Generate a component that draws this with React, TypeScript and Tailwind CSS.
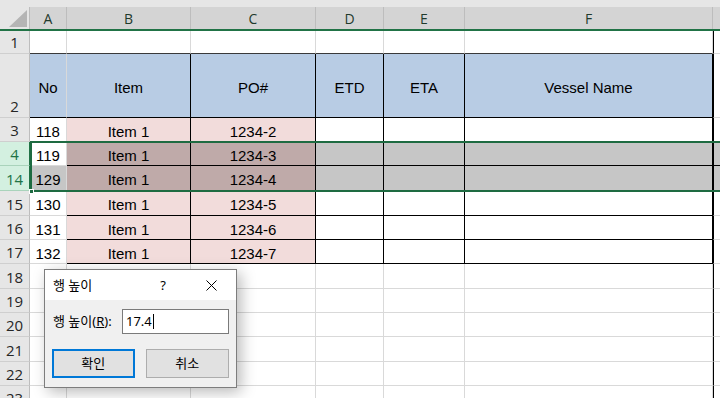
import React from 'react'

type Row = {
  n: string
  h: 'h-[23px]' | 'h-[24px]' | 'h-[25px]' | 'h-[64px]'
  kind: 'blank' | 'head' | 'data'
  sel?: boolean
  active?: boolean
  v?: [string, string, string]
}

const rows: Row[] = [
  { n: '1', h: 'h-[23px]', kind: 'blank' },
  { n: '2', h: 'h-[64px]', kind: 'head' },
  { n: '3', h: 'h-[24px]', kind: 'data', v: ['118', 'Item 1', '1234-2'] },
  { n: '4', h: 'h-[24px]', kind: 'data', sel: true, active: true, v: ['119', 'Item 1', '1234-3'] },
  { n: '14', h: 'h-[25px]', kind: 'data', sel: true, v: ['129', 'Item 1', '1234-4'] },
  { n: '15', h: 'h-[25px]', kind: 'data', v: ['130', 'Item 1', '1234-5'] },
  { n: '16', h: 'h-[24px]', kind: 'data', v: ['131', 'Item 1', '1234-6'] },
  { n: '17', h: 'h-[24px]', kind: 'data', v: ['132', 'Item 1', '1234-7'] },
  { n: '18', h: 'h-[25px]', kind: 'blank' },
  { n: '19', h: 'h-[24px]', kind: 'blank' },
  { n: '20', h: 'h-[24px]', kind: 'blank' },
  { n: '21', h: 'h-[25px]', kind: 'blank' },
  { n: '22', h: 'h-[24px]', kind: 'blank' },
  { n: '23', h: 'h-[24px]', kind: 'blank' },
]

const widths = ['w-[37px]', 'w-[124px]', 'w-[125px]', 'w-[68px]', 'w-[81px]', 'w-[248px]']
const letters = ['A', 'B', 'C', 'D', 'E', 'F']
const headers = ['No', 'Item', 'PO#', 'ETD', 'ETA', 'Vessel Name']

function Cell({ row, col }: { row: Row; col: number }) {
  const inTable = col > 0 && (row.kind === 'head' || row.kind === 'data')
  let bg = 'bg-white'
  let text = ''
  if (row.kind === 'head') {
    bg = 'bg-[#b8cce4]'
    text = headers[col]
  } else if (row.kind === 'data') {
    if (col === 1 || col === 2) bg = row.sel ? 'bg-[#bfaaa9]' : 'bg-[#f2dcdb]'
    else if (row.sel && !(col === 0 && row.active)) bg = 'bg-[#c6c6c6]'
    if (col < 3) text = row.v![col]
  }
  const right = inTable ? 'border-r border-r-black' : 'border-r border-r-[#d9d9d9]'
  let bottom = 'border-b border-b-[#d9d9d9]'
  if (inTable || (row.kind === 'head' && col === 0)) bottom = 'border-b border-b-black'
  if (row.n === '1') bottom = 'border-b border-b-[#3a3a3a]'
  return (
    <div
      className={`${widths[col]} ${bg} ${right} ${bottom} flex shrink-0 items-center justify-center pt-[4px] text-[15px] leading-[18px] text-black`}
    >
      {text}
    </div>
  )
}

function Dialog() {
  return (
    <div className="absolute left-[44px] top-[269px] w-[193px] h-[119px] border border-[#7d7d7d] bg-[#f0f0f0] shadow-[4px_4px_14px_rgba(0,0,0,0.28)] font-['Noto_Sans','Noto_Sans_CJK_KR',sans-serif] text-[13px] text-black">
      <div className="flex h-[30px] items-center bg-white pl-[8px]">
        <span className="leading-none">행 높이</span>
        <span className="ml-[68px] leading-none">?</span>
        <svg className="ml-[40px]" width="11" height="11" viewBox="0 0 11 11">
          <path d="M0.5 0.5 L10.5 10.5 M10.5 0.5 L0.5 10.5" stroke="#000" strokeWidth="1" />
        </svg>
      </div>
      <div className="px-[7px] pt-[9px]">
        <div className="flex h-[25px] items-center">
          <span className="w-[70px] pl-[1px] leading-none">
            행 높이(<span className="underline">R</span>):
          </span>
          <div className="flex h-[25px] w-[107px] items-center border border-[#7a7a7a] bg-white pl-[3px]">
            <span className="leading-none">17.4</span>
            <span className="ml-[1px] h-[15px] w-px bg-black" />
          </div>
        </div>
        <div className="mt-[15px] flex gap-[11px]">
          <button className="h-[29px] w-[83px] border-2 border-[#0078d7] bg-[#e1e1e1]">확인</button>
          <button className="h-[29px] w-[84px] border border-[#adadad] bg-[#e1e1e1]">취소</button>
        </div>
      </div>
    </div>
  )
}

export default function App() {
  return (
    <div className="relative h-[398px] w-[720px] overflow-hidden bg-white font-['Liberation_Sans',Arial,sans-serif]">
      <div className="h-[7px] bg-[#e6e6e6]" />
      <div className="flex h-[24px] border-b-2 border-[#217346] bg-[#d4d4d4] font-['Open_Sans',sans-serif] text-[14px] text-[#1f3a2c]">
        <div className="relative w-[30px] shrink-0 border-r border-[#bdbdbd] bg-[#e6e6e6]">
          <svg className="absolute left-0 top-0" width="30" height="22" viewBox="0 0 30 22">
            <path d="M9 20 L27 20 L27 3 Z" fill="#b5b5b5" />
          </svg>
        </div>
        {letters.map((l, i) => (
          <div key={l} className={`${widths[i]} flex shrink-0 items-center justify-center border-r border-[#bdbdbd]`}>
            {l}
          </div>
        ))}
        <div className="flex-1" />
      </div>
      {rows.map((row) => (
        <div key={row.n} className={`flex ${row.h}`}>
          <div
            className={`flex w-[30px] shrink-0 items-end justify-center border-b border-r pb-[1px] font-['Open_Sans',sans-serif] text-[15px] leading-[20px] ${
              row.sel
                ? 'border-b-[#a9d3bb] border-r-[#217346] bg-[#d3f0e0] text-[#217346]'
                : 'border-b-[#cfcfcf] border-r-[#bdbdbd] bg-[#e6e6e6] text-[#262626]'
            }`}
          >
            {row.n}
          </div>
          {widths.map((_, i) => (
            <Cell key={i} row={row} col={i} />
          ))}
          <div
            className={`flex-1 border-b border-l border-l-black ${
              row.sel ? 'bg-[#c6c6c6] border-b-black' : 'border-b-[#d9d9d9] bg-white'
            }`}
          />
        </div>
      ))}
      {/* selection outline around rows 4..14 */}
      <div className="pointer-events-none absolute left-[30px] right-[-2px] top-[141px] h-[51px] border-2 border-[#1e6b41]" />
      <div className="pointer-events-none absolute left-[29px] top-[189px] h-[5px] w-[5px] border border-white bg-[#1e6b41]" />
      <Dialog />
    </div>
  )
}
